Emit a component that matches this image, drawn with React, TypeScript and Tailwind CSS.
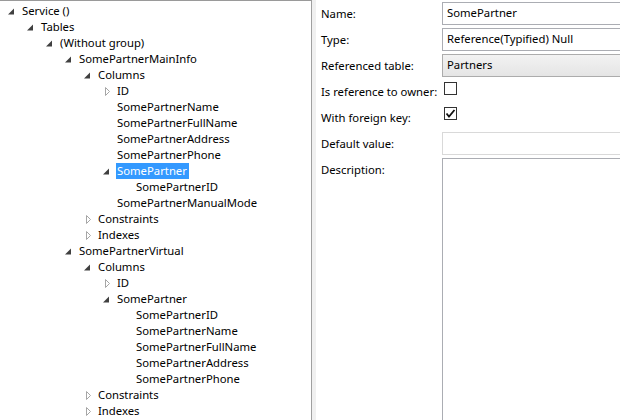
import React from 'react';

type Node = { label: string; level: number; state: 'open' | 'closed' | 'leaf'; selected?: boolean };

const nodes: Node[] = [
  { label: 'Service ()', level: 0, state: 'open' },
  { label: 'Tables', level: 1, state: 'open' },
  { label: '(Without group)', level: 2, state: 'open' },
  { label: 'SomePartnerMainInfo', level: 3, state: 'open' },
  { label: 'Columns', level: 4, state: 'open' },
  { label: 'ID', level: 5, state: 'closed' },
  { label: 'SomePartnerName', level: 5, state: 'leaf' },
  { label: 'SomePartnerFullName', level: 5, state: 'leaf' },
  { label: 'SomePartnerAddress', level: 5, state: 'leaf' },
  { label: 'SomePartnerPhone', level: 5, state: 'leaf' },
  { label: 'SomePartner', level: 5, state: 'open', selected: true },
  { label: 'SomePartnerID', level: 6, state: 'leaf' },
  { label: 'SomePartnerManualMode', level: 5, state: 'leaf' },
  { label: 'Constraints', level: 4, state: 'closed' },
  { label: 'Indexes', level: 4, state: 'closed' },
  { label: 'SomePartnerVirtual', level: 3, state: 'open' },
  { label: 'Columns', level: 4, state: 'open' },
  { label: 'ID', level: 5, state: 'closed' },
  { label: 'SomePartner', level: 5, state: 'open' },
  { label: 'SomePartnerID', level: 6, state: 'leaf' },
  { label: 'SomePartnerName', level: 6, state: 'leaf' },
  { label: 'SomePartnerFullName', level: 6, state: 'leaf' },
  { label: 'SomePartnerAddress', level: 6, state: 'leaf' },
  { label: 'SomePartnerPhone', level: 6, state: 'leaf' },
  { label: 'Constraints', level: 4, state: 'closed' },
  { label: 'Indexes', level: 4, state: 'closed' },
];

const Expander: React.FC<{ state: Node['state'] }> = ({ state }) => (
  <svg width="16" height="16" viewBox="0 0 16 16" className="shrink-0">
    {state === 'open' && <polygon points="8,5.5 8,11.5 2,11.5" fill="#404040" />}
    {state === 'closed' && (
      <polygon points="4.5,4.5 8.5,8.5 4.5,12.5" fill="#fff" stroke="#a6a6a6" strokeWidth="1" />
    )}
  </svg>
);

const TreeRow: React.FC<{ node: Node }> = ({ node }) => (
  <div className="flex items-center h-4 leading-4 whitespace-nowrap" style={{ paddingLeft: 6 + node.level * 19 }}>
    <Expander state={node.state} />
    <span className={node.selected ? 'bg-[#3399ff] text-white pr-[2px] -ml-px pl-px' : 'text-black'}>
      {node.label}
    </span>
  </div>
);

const Row: React.FC<{ label: string; children?: React.ReactNode }> = ({ label, children }) => (
  <div className="h-[26px] flex shrink-0">
    <div className="w-[121px] h-[23px] shrink-0 flex items-center whitespace-nowrap pt-px">{label}</div>
    <div className="w-[240px] shrink-0">{children}</div>
  </div>
);

const box = 'h-[23px] border px-[4px] flex items-center';

export default function App() {
  return (
    <div className="w-[620px] h-[420px] overflow-hidden flex bg-white text-[11.3px] text-black font-['Segoe_UI','Noto_Sans',sans-serif]">
      <div className="w-[312px] shrink-0 border-t border-t-[#9a9a9a] border-r border-r-[#a0a0a0] pt-[2px]">
        {nodes.map((n, i) => (
          <TreeRow key={i} node={n} />
        ))}
      </div>
      <div className="w-[4px] shrink-0 bg-[#f0f0f0]" />
      <div className="flex flex-col pl-[5px] pt-[2px] shrink-0">
        <Row label="Name:">
          <div className={`${box} border-[#abadb3]`}>SomePartner</div>
        </Row>
        <Row label="Type:">
          <div className={`${box} border-[#abadb3]`}>Reference(Typified) Null</div>
        </Row>
        <Row label="Referenced table:">
          <div className={`${box} border-[#acacac] bg-gradient-to-b from-[#f2f2f2] to-[#e5e5e5]`}>Partners</div>
        </Row>
        <Row label="Is reference to owner:">
          <div className="pt-[2px] pl-[2px]">
            <div className="w-[13px] h-[13px] border border-[#333] bg-white" />
          </div>
        </Row>
        <Row label="With foreign key:">
          <div className="pt-[1px] pl-[2px]">
            <div className="w-[13px] h-[13px] border border-[#333] bg-white flex items-center justify-center">
              <svg width="11" height="11" viewBox="0 0 11 11">
                <path d="M1.5 5.5 L4 8.5 L9.5 2" fill="none" stroke="#111" strokeWidth="1.8" />
              </svg>
            </div>
          </div>
        </Row>
        <Row label="Default value:">
          <div className={`${box} border-[#d9d9d9]`} />
        </Row>
        <div className="flex">
          <div className="w-[121px] h-[23px] shrink-0 flex items-center pt-px">Description:</div>
          <div className="w-[240px] h-[300px] shrink-0 border border-[#abadb3]" />
        </div>
      </div>
    </div>
  );
}
